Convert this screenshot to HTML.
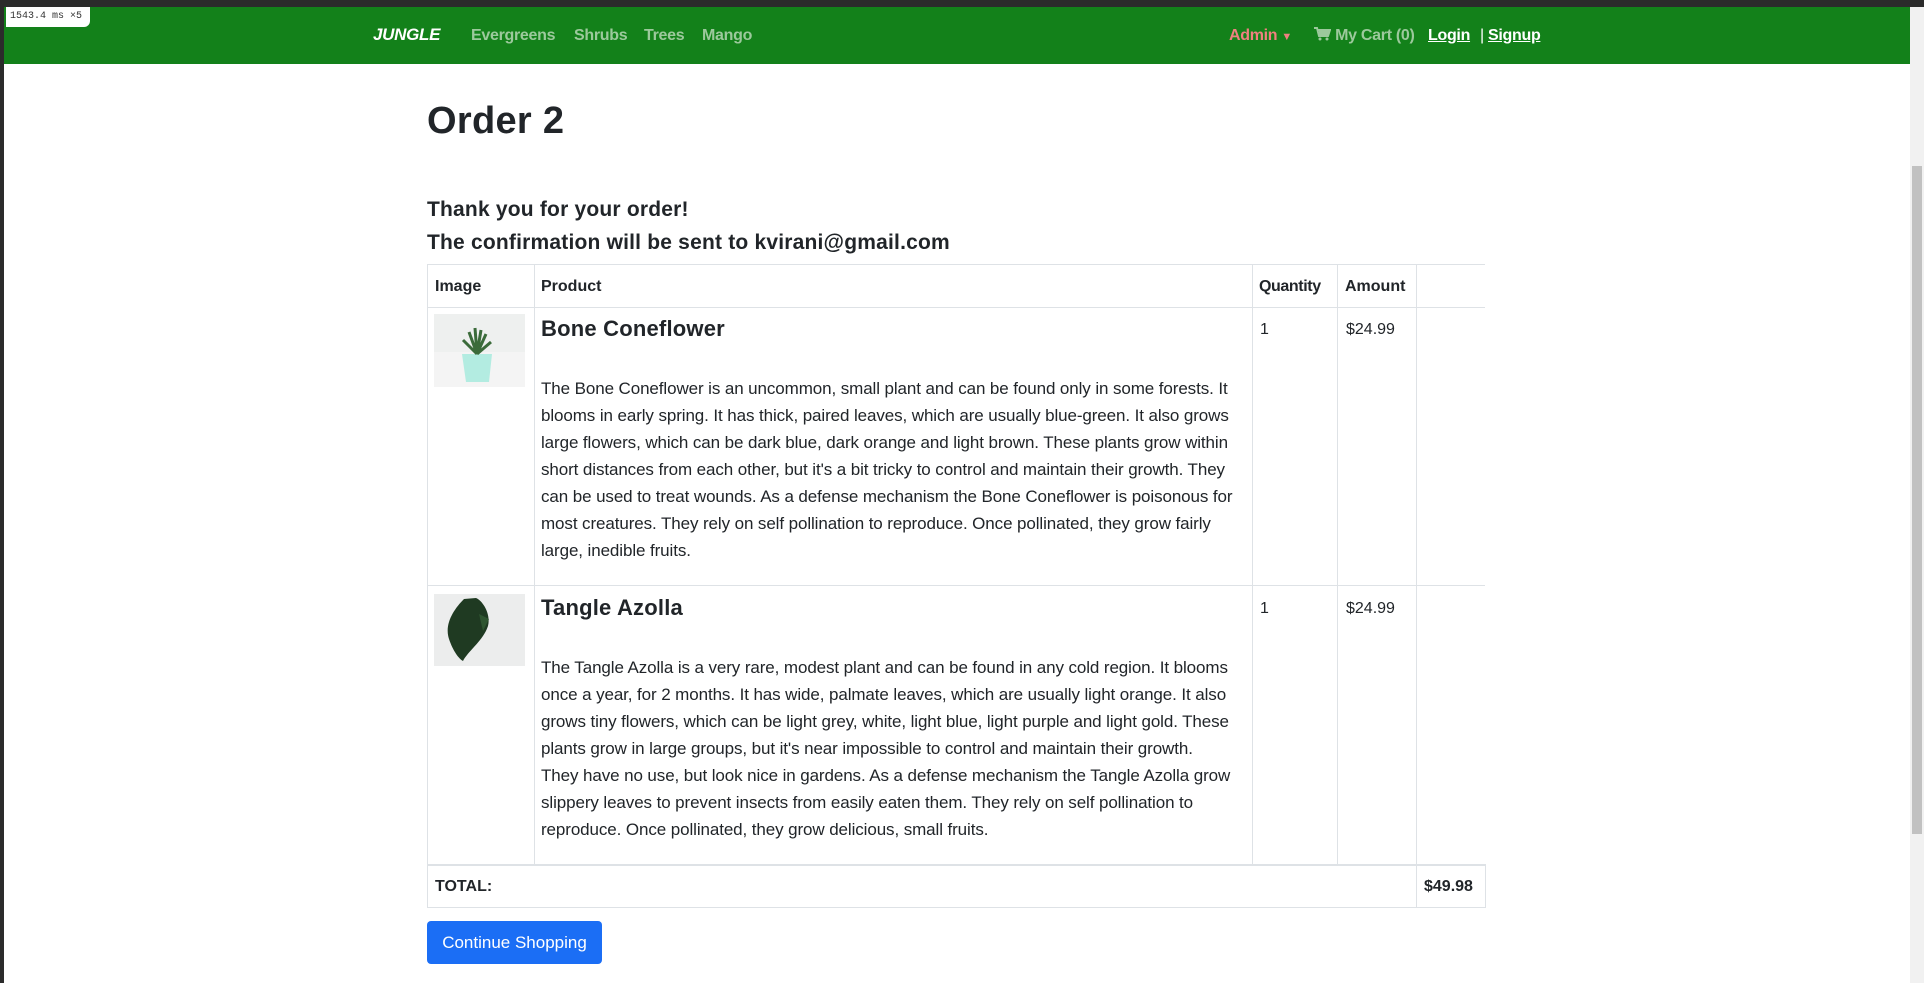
<!DOCTYPE html>
<html><head><meta charset="utf-8"><style>
*{box-sizing:border-box;margin:0;padding:0}
html,body{width:1924px;height:983px;overflow:hidden;background:#fff;font-family:"Liberation Sans",sans-serif;color:#212529}
.topbar{position:absolute;left:0;top:0;width:1924px;height:7px;background:#2b2b2b}
.leftbar{position:absolute;left:0;top:0;width:4px;height:983px;background:#2b2b2b}
.nav{position:absolute;left:4px;top:7px;width:1906px;height:57px;background:#13811a}
.nav span{position:absolute;top:20px;font-size:16px;font-weight:bold;color:#9cc99c;white-space:nowrap;letter-spacing:-0.3px}
.badge{position:absolute;left:6px;top:7px;width:84px;height:20px;background:#fff;border-radius:0 0 6px 0;font:10px "Liberation Mono",monospace;color:#333;padding:4px 4px;white-space:nowrap;overflow:hidden}
.scroll{position:absolute;left:1910px;top:7px;width:14px;height:976px;background:#f1f1f1}
.thumb{position:absolute;left:1912px;top:166px;width:10px;height:668px;background:#c1c1c1}
h1{position:absolute;left:427px;top:100px;font-size:38px;font-weight:bold;color:#212529;letter-spacing:0.3px}
h4{position:absolute;left:427px;font-size:21px;font-weight:bold;letter-spacing:0.2px}
.t{position:absolute}
.h{position:absolute;font-size:16px;font-weight:bold;white-space:nowrap}
.d{position:absolute;left:541px;font-size:17px;line-height:27px;white-space:nowrap;color:#212529;letter-spacing:-0.1px}
.pt{position:absolute;left:541px;font-size:22px;font-weight:bold;letter-spacing:0.2px}
.c{position:absolute;font-size:16px}
.btn{position:absolute;left:427px;top:921px;width:175px;height:43px;background:#1b6ef5;border-radius:4px;color:#fff;font-size:17px;text-align:center;line-height:43px}
</style></head><body>
<div class="topbar"></div><div class="leftbar"></div>
<div class="nav">
<span style="left:369px;top:18px;color:#fff;font-style:italic;font-size:17px;font-weight:900">JUNGLE</span>
<span style="left:467px">Evergreens</span>
<span style="left:570px">Shrubs</span>
<span style="left:640px">Trees</span>
<span style="left:698px">Mango</span>
<span style="left:1225px;color:#f08080">Admin <span style="position:static;font-size:11px;color:#f08080">&#9660;</span></span>
<span style="left:1310px"><svg width="17" height="14" viewBox="0 0 17 14" style="vertical-align:-1px"><path d="M0 1h3l2 8h9l2-6H4" fill="none" stroke="#9cc99c" stroke-width="2"/><rect x="5" y="3" width="10" height="5" fill="#9cc99c"/><circle cx="6" cy="12" r="1.5" fill="#9cc99c"/><circle cx="13" cy="12" r="1.5" fill="#9cc99c"/></svg> My Cart (0)</span>
<span style="left:1424px;color:#fff;text-decoration:underline">Login</span>
<span style="left:1476px;color:#fff;font-weight:normal">|</span>
<span style="left:1484px;color:#fff;text-decoration:underline">Signup</span>
</div>
<div class="badge">1543.4 ms ×5</div>
<div class="scroll"></div><div class="thumb"></div>

<h1>Order 2</h1>
<h4 style="top:198px">Thank you for your order!</h4>
<h4 style="top:231px">The confirmation will be sent to kvirani@gmail.com</h4>

<div class="t" style="left:427px;top:264px;width:1058px;height:1px;background:#dee2e6"></div>
<div class="t" style="left:427px;top:307px;width:1058px;height:1px;background:#dee2e6"></div>
<div class="t" style="left:427px;top:585px;width:1058px;height:1px;background:#dee2e6"></div>
<div class="t" style="left:427px;top:864px;width:1058px;height:2px;background:#dee2e6"></div>
<div class="t" style="left:427px;top:907px;width:1059px;height:1px;background:#dee2e6"></div>
<div class="t" style="left:427px;top:264px;width:1px;height:644px;background:#dee2e6"></div>
<div class="t" style="left:534px;top:264px;width:1px;height:600px;background:#dee2e6"></div>
<div class="t" style="left:1252px;top:264px;width:1px;height:600px;background:#dee2e6"></div>
<div class="t" style="left:1337px;top:264px;width:1px;height:600px;background:#dee2e6"></div>
<div class="t" style="left:1416px;top:264px;width:1px;height:644px;background:#dee2e6"></div>
<div class="t" style="left:1485px;top:864px;width:1px;height:44px;background:#dee2e6"></div>

<div class="h" style="left:435px;top:278px">Image</div>
<div class="h" style="left:541px;top:278px">Product</div>
<div class="h" style="left:1259px;top:278px;letter-spacing:-0.4px">Quantity</div>
<div class="h" style="left:1345px;top:278px">Amount</div>

<svg style="position:absolute;left:434px;top:314px" width="91" height="73"><rect width="91" height="73" fill="#eef0ef"/><rect y="38" width="91" height="35" fill="#f4f4f4"/><path d="M28 40h30l-3 28H32z" fill="#b3ece1"/><path d="M43 40l-8-22M43 40l-2-26M43 40l4-24M43 40l9-20M43 40l14-12M43 40l-14-14" stroke="#3b6b3a" stroke-width="3"/></svg>
<div class="pt" style="top:316px">Bone Coneflower</div>
<div class="c" style="left:1260px;top:321px">1</div>
<div class="c" style="left:1346px;top:321px">$24.99</div>
<div class="d" style="top:375px">The Bone Coneflower is an uncommon, small plant and can be found only in some forests. It<br>blooms in early spring. It has thick, paired leaves, which are usually blue-green. It also grows<br>large flowers, which can be dark blue, dark orange and light brown. These plants grow within<br>short distances from each other, but it's a bit tricky to control and maintain their growth. They<br>can be used to treat wounds. As a defense mechanism the Bone Coneflower is poisonous for<br>most creatures. They rely on self pollination to reproduce. Once pollinated, they grow fairly<br>large, inedible fruits.</div>

<svg style="position:absolute;left:434px;top:594px" width="91" height="72"><rect width="91" height="72" fill="#eceded"/><path d="M30 5c-10 10-20 25-15 40 4 12 10 20 14 22 5-10 20-20 25-35 3-12-5-25-12-28z" fill="#1f3a22"/><path d="M45 20l10 5-6 12z" fill="#2e5530"/></svg>
<div class="pt" style="top:595px">Tangle Azolla</div>
<div class="c" style="left:1260px;top:600px">1</div>
<div class="c" style="left:1346px;top:600px">$24.99</div>
<div class="d" style="top:654px">The Tangle Azolla is a very rare, modest plant and can be found in any cold region. It blooms<br>once a year, for 2 months. It has wide, palmate leaves, which are usually light orange. It also<br>grows tiny flowers, which can be light grey, white, light blue, light purple and light gold. These<br>plants grow in large groups, but it's near impossible to control and maintain their growth.<br>They have no use, but look nice in gardens. As a defense mechanism the Tangle Azolla grow<br>slippery leaves to prevent insects from easily eaten them. They rely on self pollination to<br>reproduce. Once pollinated, they grow delicious, small fruits.</div>

<div class="h" style="left:435px;top:878px">TOTAL:</div>
<div class="h" style="left:1424px;top:878px">$49.98</div>

<div class="btn">Continue Shopping</div>
</body></html>
